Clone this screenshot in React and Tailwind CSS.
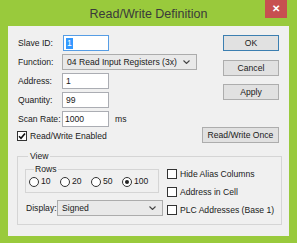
import React from "react";

function Check({ checked }) {
  return (
    <span className="flex h-[10px] w-[10px] shrink-0 items-center justify-center border border-[#333] bg-white">
      {checked && (
        <svg width="8" height="8" viewBox="0 0 8 8">
          <path d="M1 4.2 L3 6.2 L7 1.4" fill="none" stroke="#111" strokeWidth="1.6" />
        </svg>
      )}
    </span>
  );
}

function Radio({ on }) {
  return (
    <span className="flex h-[10px] w-[10px] shrink-0 items-center justify-center rounded-full border border-[#333] bg-white">
      {on && <span className="h-[4px] w-[4px] rounded-full bg-[#222]" />}
    </span>
  );
}

function Chevron() {
  return (
    <svg width="7" height="4" viewBox="0 0 7 4">
      <path d="M0.5 0.5 L3.5 3.5 L6.5 0.5" fill="none" stroke="#444" strokeWidth="1.1" />
    </svg>
  );
}

function Select({ value, className }) {
  return (
    <div
      className={`flex h-[16px] shrink-0 items-center justify-between border border-[#acacac] bg-[#e9e9e9] pl-[4px] pr-[6px] ${className}`}
    >
      <span>{value}</span>
      <Chevron />
    </div>
  );
}

function Row({ label, children }) {
  return (
    <div className="flex h-[16px] items-center">
      <span className="w-[44px] shrink-0">{label}</span>
      {children}
    </div>
  );
}

function Button({ children, primary, wide }) {
  return (
    <div
      className={`flex h-[16px] items-center justify-center border bg-[#e1e1e1] ${
        primary ? "border-[#3c7fb1]" : "border-[#adadad]"
      } ${wide ? "w-[77px]" : "w-[56px]"}`}
    >
      {children}
    </div>
  );
}

export default function App() {
  return (
    <div className="flex h-[243px] w-[297px] flex-col whitespace-nowrap bg-[#99ca3c] font-['Liberation_Sans',Arial,sans-serif] text-[8.6px] leading-[10px] text-[#1a1a1a]">
      {/* title bar */}
      <div className="relative flex h-[26px] shrink-0 items-center justify-center pt-[1px]">
        <span className="text-[12.5px] text-[#3a3a3a]">Read/Write Definition</span>
        <div className="absolute right-[10px] top-0 flex h-[18px] w-[22px] items-center justify-center bg-[#c75050] text-[10px] font-bold text-white">
          ✕
        </div>
      </div>

      {/* client area */}
      <div className="mx-[8px] h-[210px] bg-[#f0f0f0] px-[10px] pt-[9px]">
        <div className="flex justify-between">
          <div className="flex flex-col">
            <div className="flex flex-col gap-[3px]">
              <Row label="Slave ID:">
                <div className="ml-[1px] flex h-[16px] w-[46px] items-center border border-[#569de5] bg-white pl-[2px]">
                  <span className="bg-[#3399ff] px-[1px] leading-[11px] text-white">1</span>
                </div>
              </Row>
              <Row label="Function:">
                <Select value="04 Read Input Registers (3x)" className="w-[135px]" />
              </Row>
              <Row label="Address:">
                <div className="flex h-[16px] w-[47px] items-center border border-[#abadb3] bg-white pl-[3px]">1</div>
              </Row>
              <Row label="Quantity:">
                <div className="flex h-[16px] w-[47px] items-center border border-[#abadb3] bg-white pl-[3px]">99</div>
              </Row>
              <Row label="Scan Rate:">
                <div className="flex h-[16px] w-[47px] items-center border border-[#abadb3] bg-white pl-[2px]">1000</div>
                <span className="ml-[6px]">ms</span>
              </Row>
            </div>
            <div className="-ml-[1px] mt-[4px] flex items-center gap-[3px]">
              <Check checked />
              <span>Read/Write Enabled</span>
            </div>
          </div>

          <div className="flex flex-col items-end">
            <Button primary>OK</Button>
            <div className="mt-[9px]">
              <Button>Cancel</Button>
            </div>
            <div className="mt-[8px]">
              <Button>Apply</Button>
            </div>
            <div className="mt-[27px]">
              <Button wide>Read/Write Once</Button>
            </div>
          </div>
        </div>

        <fieldset className="-ml-[1px] mt-[8px] w-[264px] border border-[#d5d5d5] px-[7px] pb-[8px]">
          <legend className="ml-[3px] px-[2px] leading-[10px]">View</legend>
          <div className="flex">
            <div className="flex w-[138px] shrink-0 flex-col">
              <fieldset className="mt-[3px] w-[134px] border border-[#d5d5d5] px-[3px] pb-[5px]">
                <legend className="ml-[5px] px-[1px] leading-[10px]">Rows</legend>
                <div className="mt-[2px] flex">
                  {["10", "20", "50", "100"].map((v) => (
                    <div key={v} className="flex w-[31px] items-center gap-[2px] leading-[11px]">
                      <Radio on={v === "100"} />
                      <span>{v}</span>
                    </div>
                  ))}
                </div>
              </fieldset>
              <div className="mt-[7px] flex h-[16px] items-center pl-[1px]">
                <span className="w-[31px] shrink-0">Display:</span>
                <Select value="Signed" className="w-[106px]" />
              </div>
            </div>

            <div className="ml-[4px] mt-[8px] flex flex-col gap-[8px]">
              {["Hide Alias Columns", "Address in Cell", "PLC Addresses (Base 1)"].map((t) => (
                <div key={t} className="flex h-[10px] items-center gap-[3px]">
                  <Check />
                  <span>{t}</span>
                </div>
              ))}
            </div>
          </div>
        </fieldset>
      </div>
    </div>
  );
}
